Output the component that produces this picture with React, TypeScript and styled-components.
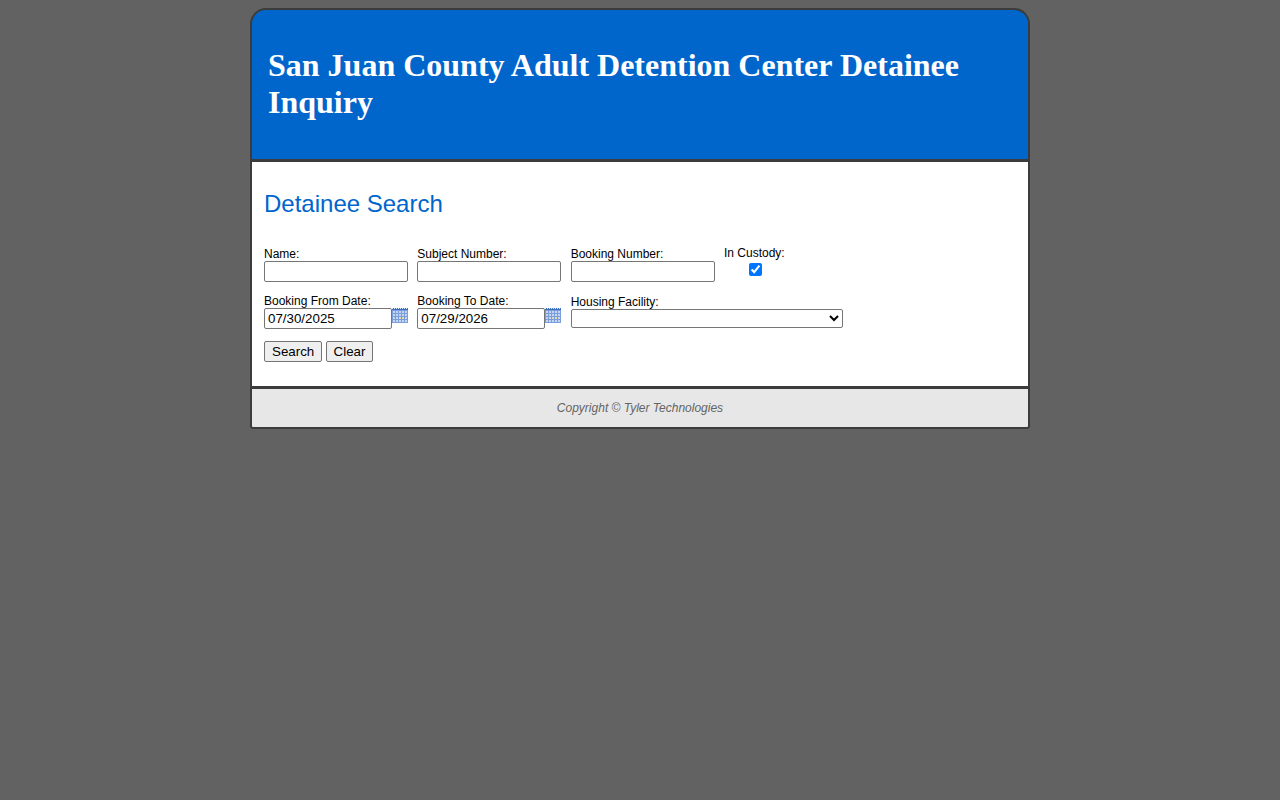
import React from "react";
import styled, { createGlobalStyle } from "styled-components";

const GlobalStyle = createGlobalStyle`
  html, body {
    margin: 0;
    padding: 0;
    min-height: 100%;
    background: #626262;
    font-family: "Liberation Sans", Arial, sans-serif;
  }
`;

const Page = styled.div`
  width: 780px;
  margin: 8px auto 0;
  box-sizing: border-box;
  border: 2px solid #3c3c3c;
  border-radius: 16px 16px 3px 3px;
  background: #3c3c3c;
`;

const Banner = styled.header`
  box-sizing: border-box;
  height: 152px;
  padding: 37px 16px 0;
  background: #0066cc;
  border-bottom: 3px solid #3c3c3c;
  border-radius: 14px 14px 0 0;
`;

const Title = styled.h1`
  margin: 0;
  font-family: "Liberation Serif", "Times New Roman", serif;
  font-size: 32px;
  line-height: 37px;
  font-weight: bold;
  color: #fff;
`;

const Content = styled.main`
  box-sizing: border-box;
  height: 224px;
  padding: 28px 12px 0;
  background: #fff;
`;

const Heading = styled.h2`
  margin: 0 0 29px;
  font-size: 24px;
  line-height: 28px;
  font-weight: normal;
  color: #0066cc;
`;

const Row = styled.div`
  display: flex;
  align-items: flex-end;
  column-gap: 9.33px;
  margin-bottom: 12px;
`;

const Field = styled.div<{ $wide?: boolean }>`
  width: ${(p) => (p.$wide ? "272px" : "144px")};
  flex: none;
`;

const Label = styled.label`
  display: block;
  font-size: 12px;
  line-height: 14px;
  color: #000;
`;

const TextInput = styled.input<{ $short?: boolean }>`
  display: block;
  box-sizing: border-box;
  width: ${(p) => (p.$short ? "128px" : "144px")};
  height: 21px;
  margin: 0;
  padding: 1px 3px;
  border: 1px solid #767676;
  border-radius: 2px;
  background: #fff;
  font-family: "Liberation Sans", Arial, sans-serif;
  font-size: 13.3333px;
  color: #000;
`;

const DateWrap = styled.div`
  display: flex;
  align-items: flex-start;
`;

const CalendarButton = styled.svg`
  display: block;
  flex: none;
`;

const CustodyField = styled.div`
  align-self: flex-start;
  width: 61px;
  flex: none;
  margin-top: -1px;
`;

const CustodyBox = styled.input`
  display: block;
  width: 13px;
  height: 13px;
  margin: 3px 0 0 25px;
  accent-color: #0075ff;
`;

const Select = styled.select`
  display: block;
  box-sizing: border-box;
  width: 272px;
  height: 19px;
  margin: 0 0 1px;
  padding: 0;
  border: 1px solid #767676;
  border-radius: 2px;
  background: #fff;
  font-family: "Liberation Sans", Arial, sans-serif;
  font-size: 13.3333px;
  color: #000;
`;

const Actions = styled.div`
  display: flex;
  column-gap: 3.33px;
`;

const Button = styled.button`
  box-sizing: border-box;
  height: 21px;
  margin: 0;
  padding: 1px 7px;
  border: 1px solid #767676;
  border-radius: 2px;
  background: #efefef;
  font-family: "Liberation Sans", Arial, sans-serif;
  font-size: 13.3333px;
  color: #000;
`;

const Footer = styled.footer`
  box-sizing: border-box;
  height: 41px;
  padding-top: 2px;
  background: #e7e7e7;
  border-top: 3px solid #3c3c3c;
  border-radius: 0 0 1px 1px;
  text-align: center;
  font-size: 12px;
  line-height: 34px;
  font-style: italic;
  color: #646464;
`;

const CalendarIcon = () => {
  const cols = [1, 4, 7, 10, 13];
  const rows = [3, 6, 9, 12];
  return (
    <CalendarButton width="16" height="15" viewBox="0 0 16 15" aria-hidden="true">
      <rect x="0" y="0" width="16" height="15" fill="#7a9edb" />
      <rect x="0" y="0" width="16" height="2" fill="#3f6fc0" />
      <path d="M0 .5h16" stroke="#dfe8f6" strokeDasharray="1 1" />
      {rows.map((y) =>
        cols.map((x) => (
          <rect
            key={`${x}-${y}`}
            x={x}
            y={y}
            width="2"
            height="2"
            fill={(x === 7 || x === 10) && y === 9 ? "#e0dab0" : "#c4d5f1"}
          />
        ))
      )}
    </CalendarButton>
  );
};

export default function App() {
  return (
    <>
      <GlobalStyle />
      <Page>
        <Banner>
          <Title>San Juan County Adult Detention Center Detainee Inquiry</Title>
        </Banner>
        <Content>
          <Heading>Detainee Search</Heading>
          <Row>
            <Field>
              <Label>Name:</Label>
              <TextInput type="text" />
            </Field>
            <Field>
              <Label>Subject Number:</Label>
              <TextInput type="text" />
            </Field>
            <Field>
              <Label>Booking Number:</Label>
              <TextInput type="text" />
            </Field>
            <CustodyField>
              <Label>In Custody:</Label>
              <CustodyBox type="checkbox" defaultChecked />
            </CustodyField>
          </Row>
          <Row>
            <Field>
              <Label>Booking From Date:</Label>
              <DateWrap>
                <TextInput $short type="text" defaultValue="07/30/2025" />
                <CalendarIcon />
              </DateWrap>
            </Field>
            <Field>
              <Label>Booking To Date:</Label>
              <DateWrap>
                <TextInput $short type="text" defaultValue="07/29/2026" />
                <CalendarIcon />
              </DateWrap>
            </Field>
            <Field $wide>
              <Label>Housing Facility:</Label>
              <Select defaultValue="">
                <option value=""></option>
              </Select>
            </Field>
          </Row>
          <Actions>
            <Button type="button">Search</Button>
            <Button type="button">Clear</Button>
          </Actions>
        </Content>
        <Footer>Copyright © Tyler Technologies</Footer>
      </Page>
    </>
  );
}
